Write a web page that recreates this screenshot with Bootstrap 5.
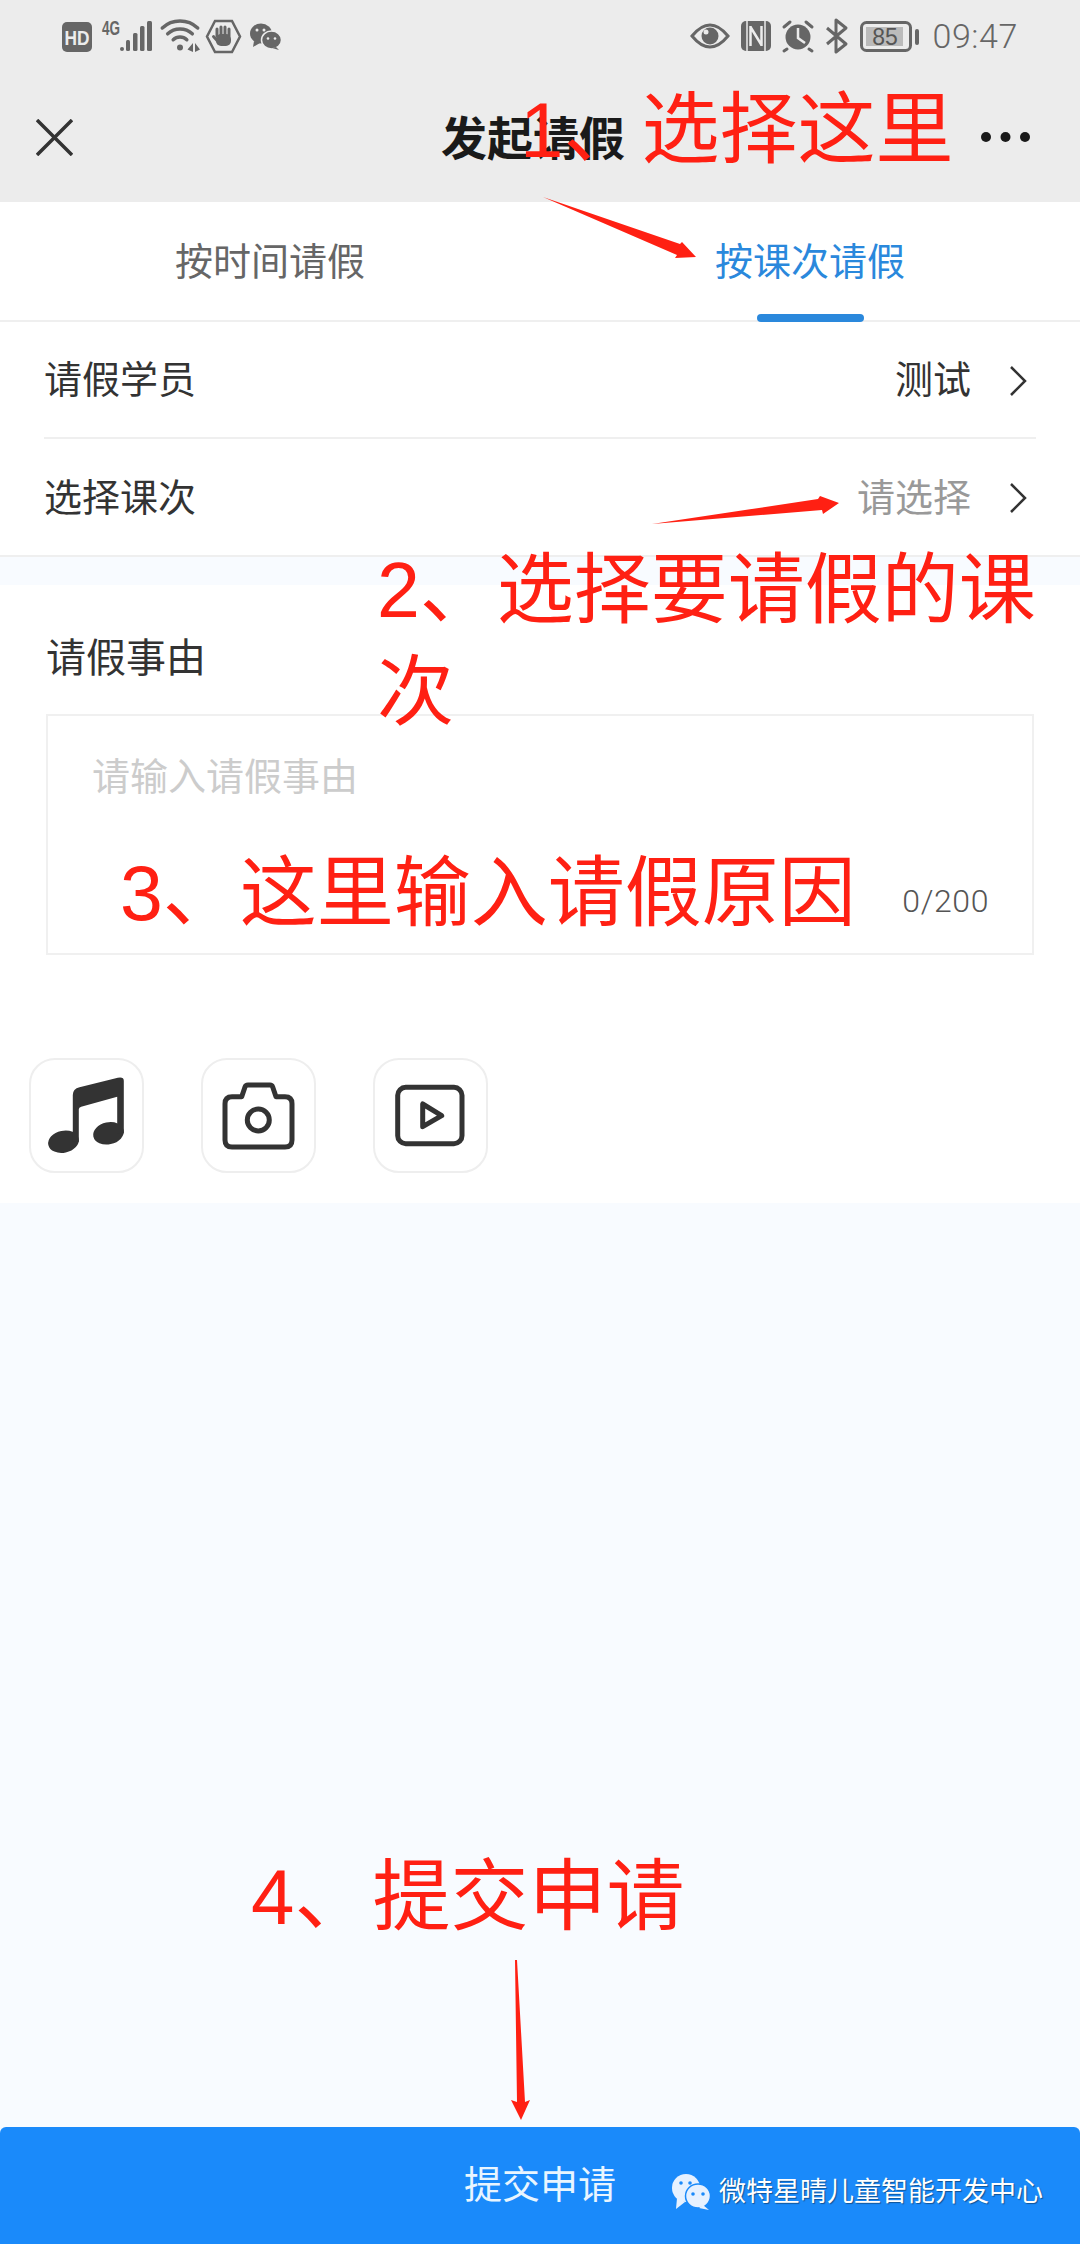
<!DOCTYPE html>
<html lang="zh-CN">
<head>
    <meta charset="UTF-8">
    <meta name="viewport" content="width=device-width, initial-scale=1.0">
    <title>发起请假</title>
    <link href="https://cdn.jsdelivr.net/npm/bootstrap@5.3.0/dist/css/bootstrap.min.css" rel="stylesheet">
    <style>
        body { font-family: "Liberation Sans", "Noto Sans CJK SC", sans-serif; background: #f8fbff; color: #333; }
        .leave-page { width: 1080px; height: 2244px; position: relative; overflow: hidden; }
        .top-area { background: #ececec; height: 202px; }
        .status-row { height: 72px; padding: 0 62px; }
        .clock { font-family: Roboto, sans-serif; font-weight: 300; font-size: 34px; color: #666; margin-left: 9px; line-height: 1; letter-spacing: .6px; }
        .title-row { display: grid; grid-template-columns: 1fr auto 1fr; height: 130px; padding: 0 50px 0 36px; align-items: center; }
        .page-title { font-size: 46px; font-weight: 700; color: #1a1a1a; line-height: 1; margin: 0; position: relative; top: 2px; }
        .tab-row { height: 120px; background: #fff; border-bottom: 2px solid #efefef; }
        .tab-item { width: 540px; font-size: 38px; color: #666; height: 118px; line-height: 120px; text-align: center; position: relative; }
        .tab-active { color: #2a88dc; }
        .tab-active::after { content: ""; position: absolute; left: 217px; bottom: -2px; width: 107px; height: 8px; border-radius: 4px; background: #2a88dc; }
        .form-rows { background: #fff; padding: 0 44px; border-bottom: 2px solid #efefef; border-radius: 0; }
        .form-rows .list-group-item { height: 117px; padding: 2px 9px 0 0; font-size: 38px; color: #333; background: transparent; border-color: #efefef; border-width: 0 0 2px; }
        .form-rows .list-group-item:last-child { border-bottom: 0; height: 116px; }
        .row-value { gap: 38px; }
        .row-muted { color: #999; }
        .reason-box { background: #fff; margin-top: 28px; height: 618px; padding: 45px 46px 0 46px; }
        .reason-label { font-size: 40px; line-height: 56px; color: #333; margin-bottom: 28px; }
        .reason-wrap { position: relative; }
        .reason-input { display: block; width: 100%; height: 241px; padding: 36px 44px; font-size: 38px; line-height: 50px; border: 2px solid #f0f0f0; border-radius: 0; resize: none; box-shadow: none; }
        .reason-input::placeholder { color: #ccc; opacity: 1; }
        .reason-count { position: absolute; right: 45px; bottom: 35px; font-family: Roboto, sans-serif; font-weight: 300; font-size: 32px; line-height: 38px; color: #555; letter-spacing: .6px; }
        .media-row { margin: 103px 0 0 -17px; gap: 57px; }
        .media-btn { width: 115px; height: 115px; border: 2px solid #eeeeee; border-radius: 26px; background: #fff; padding: 0; }
        .media-btn svg { display: block; width: 111px; height: 111px; }
        .submit-bar { position: absolute; left: 0; right: 0; bottom: 0; height: 117px; background: #1a8afa; color: #e8f5ff; font-size: 38px; border: 0; border-radius: 6px 6px 0 0; padding: 0; }
        .submit-bar:hover { background: #1a8afa; color: #e8f5ff; }
        .mark-layer { position: absolute; left: 0; top: 0; pointer-events: none; }
        .note-text { position: absolute; color: #ff2013; font-size: 78px; line-height: 102px; white-space: nowrap; }
        .note-one { left: 520px; top: 79px; }
        .note-two { left: 377px; top: 539px; width: 670px; white-space: normal; font-size: 77px; }
        .note-three { left: 120px; top: 842px; font-size: 77px; }
        .note-four { left: 251px; top: 1846px; }
        .water-mark { position: absolute; left: 671px; top: 2172px; gap: 8px; font-size: 27px; line-height: 40px; color: #fff; text-shadow: 1px 1px 1px rgba(0,0,0,.4); white-space: nowrap; }
    </style>
</head>
<body>
    <div class="leave-page d-flex flex-column">
        <div class="top-area">
            <div class="status-row d-flex justify-content-between align-items-center">
                <svg width="220" height="40" viewBox="62 16 220 40" fill="#666">
                    <!-- HD -->
                    <rect x="62" y="22" width="30" height="30" rx="5"/>
                    <text x="64.5" y="44.5" font-family="Liberation Sans" font-weight="700" font-size="21" fill="#ececec" textLength="25" lengthAdjust="spacingAndGlyphs">HD</text>
                    <!-- 4G + signal -->
                    <text x="102" y="35" font-family="Liberation Sans" font-weight="700" font-size="20" textLength="18" lengthAdjust="spacingAndGlyphs">4G</text>
                    <rect x="120" y="47" width="4" height="4" rx="2"/>
                    <rect x="126" y="40" width="4" height="11" rx="1.5"/>
                    <rect x="133" y="33" width="4.5" height="18" rx="1.5"/>
                    <rect x="140" y="26" width="4.5" height="25" rx="1.5"/>
                    <rect x="147" y="21" width="5" height="30" rx="1.5"/>
                    <!-- wifi -->
                    <g fill="none" stroke="#666" stroke-width="3.5" stroke-linecap="round">
                        <path d="M162.3 28A26 26 0 0 1 197.7 28"/>
                        <path d="M167.7 33.8A18 18 0 0 1 192.3 33.8"/>
                        <path d="M173.2 39.7A10 10 0 0 1 186.8 39.7"/>
                    </g>
                    <circle cx="180" cy="47.5" r="3"/>
                    <path d="M193 43V52L187.5 49.5ZM195 43V52L200 49.5Z"/>
                    <!-- hand -->
                    <path d="M207 36.5L215 21H232L240 36.5L232 52H215Z" fill="none" stroke="#666" stroke-width="2.5"/>
                    <path d="M217 36V29M221 35V27M225 35V27M229 36V29" stroke="#666" stroke-width="3" stroke-linecap="round"/>
                    <path d="M213.5 36.5L217.5 41" stroke="#666" stroke-width="3" stroke-linecap="round"/>
                    <rect x="216" y="34" width="15" height="12" rx="5"/>
                    <!-- wechat -->
                    <ellipse cx="261" cy="33.5" rx="11" ry="10"/>
                    <path d="M254 41L253 47L260 43Z"/>
                    <circle cx="257" cy="30" r="1.5" fill="#ececec"/>
                    <circle cx="264" cy="30" r="1.5" fill="#ececec"/>
                    <ellipse cx="271.5" cy="40" rx="10" ry="9" stroke="#ececec" stroke-width="1.5"/>
                    <path d="M276 47L279 50L272 48Z"/>
                    <circle cx="268" cy="38.5" r="1.3" fill="#ececec"/>
                    <circle cx="275" cy="38.5" r="1.3" fill="#ececec"/>
                </svg>
                <div class="d-flex align-items-center">
                    <svg width="235" height="40" viewBox="690 16 235 40" fill="#666">
                        <!-- eye -->
                        <path d="M694 36Q712 14 730 36Q712 58 694 36Z" fill="none" stroke="#666" stroke-width="3"/>
                        <circle cx="712" cy="36" r="8.5"/>
                        <circle cx="708" cy="32" r="2.5" fill="#ececec"/>
                        <!-- nfc -->
                        <rect x="743" y="21" width="30" height="30" rx="5"/>
                        <path d="M749 21V51M767 21V51" stroke="#ececec" stroke-width="1.5"/>
                        <path d="M752.5 26V46M763.5 26V46M752.5 27L763.5 45" fill="none" stroke="#ececec" stroke-width="2.5"/>
                        <!-- alarm -->
                        <circle cx="800" cy="37" r="12.5"/>
                        <path d="M800 28V38L807 43" fill="none" stroke="#ececec" stroke-width="2.5"/>
                        <path d="M786 27L792 22M814 27L808 22M789 49L786 51M811 49L814 51" fill="none" stroke="#666" stroke-width="3" stroke-linecap="round"/>
                        <!-- bluetooth -->
                        <path d="M829 28L848 44L838 52V20L848 28L829 44" fill="none" stroke="#666" stroke-width="3" stroke-linejoin="round"/>
                        <!-- battery -->
                        <rect x="863.5" y="22.5" width="49" height="28" rx="5" fill="none" stroke="#666" stroke-width="3"/>
                        <rect x="868" y="27" width="37" height="19" fill="#bbb"/>
                        <text x="887" y="45" text-anchor="middle" font-family="Liberation Sans" font-size="23" fill="#555">85</text>
                        <rect x="917" y="29" width="4" height="16" rx="2"/>
                    </svg>
                    <span class="clock">09:47</span>
                </div>
            </div>
            <div class="title-row">
                <div>
                    <svg width="37" height="37" viewBox="0 0 37 37" class="d-block"><path d="M1 1L36 36M36 1L1 36" fill="none" stroke="#333" stroke-width="3.5"/></svg>
                </div>
                <h1 class="page-title">发起请假</h1>
                <div class="d-flex justify-content-end">
                    <svg width="49" height="10" viewBox="0 0 49 10" class="d-block" fill="#1a1a1a"><circle cx="5" cy="5" r="5"/><circle cx="24.5" cy="5" r="5"/><circle cx="44" cy="5" r="5"/></svg>
                </div>
            </div>
        </div>

        <div class="tab-row d-flex">
            <div class="tab-item">按时间请假</div>
            <div class="tab-item tab-active">按课次请假</div>
        </div>

        <div class="list-group list-group-flush form-rows">
            <div class="list-group-item d-flex justify-content-between align-items-center">
                <span>请假学员</span>
                <span class="d-flex align-items-center row-value">测试
                    <svg width="18" height="32" viewBox="0 0 18 32"><path d="M2 2L16 16L2 30" fill="none" stroke="#333" stroke-width="2.5"/></svg>
                </span>
            </div>
            <div class="list-group-item d-flex justify-content-between align-items-center">
                <span>选择课次</span>
                <span class="d-flex align-items-center row-value"><span class="row-muted">请选择</span>
                    <svg width="18" height="32" viewBox="0 0 18 32"><path d="M2 2L16 16L2 30" fill="none" stroke="#333" stroke-width="2.5"/></svg>
                </span>
            </div>
        </div>

        <div class="reason-box">
            <div class="reason-label">请假事由</div>
            <div class="reason-wrap">
                <textarea class="form-control reason-input" placeholder="请输入请假事由"></textarea>
                <span class="reason-count">0/200</span>
            </div>
            <div class="d-flex media-row">
                <button type="button" class="btn media-btn">
                    <svg viewBox="2 2 111 111" fill="#333">
                        <ellipse cx="34.5" cy="83.7" rx="15.5" ry="11" transform="rotate(-12 34.5 83.7)"/>
                        <ellipse cx="79.5" cy="75.3" rx="15.5" ry="11" transform="rotate(-12 79.5 75.3)"/>
                        <path d="M43.8 83.7V37Q43.8 31 50.5 29.3L88.8 19.7Q94.8 18.5 94.8 22.7V75.3H88.2V38.7L52.2 48.7Q49.8 49.5 49.8 51.3V83.7Z"/>
                    </svg>
                </button>
                <button type="button" class="btn media-btn">
                    <svg viewBox="2 2 111 111" fill="none" stroke="#333" stroke-width="5" stroke-linejoin="round">
                        <path d="M31 38.7H40.7L44 29Q44.7 27 47 27H69Q71 27 71.7 29L75 38.7H84Q91 38.7 91 45.7V82Q91 89 84 89H31Q24 89 24 82V45.7Q24 38.7 31 38.7Z"/>
                        <circle cx="57.3" cy="62" r="11"/>
                    </svg>
                </button>
                <button type="button" class="btn media-btn">
                    <svg viewBox="2 2 111 111" fill="none" stroke="#333" stroke-width="5" stroke-linejoin="round">
                        <rect x="24.7" y="29.3" width="64.3" height="56.4" rx="8"/>
                        <path d="M49.7 46V68.7L68.7 57.7Z"/>
                    </svg>
                </button>
            </div>
        </div>

        <button type="button" class="btn submit-bar">提交申请</button>

        <!-- red marks put on top of the screenshot -->
        <svg class="mark-layer" width="1080" height="2244" viewBox="0 0 1080 2244" fill="#ff2013">
            <polygon points="543,197 680,244 682,242 696,257 675,258 677,255"/>
            <polygon points="652,524 818,499 820,496 839,503 823,514 822,510"/>
            <polygon points="515,1960 517,1960 525,2102 530,2100 521,2120 511,2100 517,2102"/>
        </svg>
        <div class="note-text note-one">1、选择这里</div>
        <div class="note-text note-two">2、选择要请假的课次</div>
        <div class="note-text note-three">3、这里输入请假原因</div>
        <div class="note-text note-four">4、提交申请</div>

        <div class="water-mark d-flex align-items-center">
            <svg width="40" height="38" viewBox="0 0 40 38" fill="#e6f1ff">
                <ellipse cx="15" cy="15" rx="14" ry="14"/>
                <path d="M6 25L5 36L14 29Z"/>
                <ellipse cx="27" cy="23" rx="12.5" ry="12" stroke="#1a8afa" stroke-width="1.5"/>
                <path d="M32 32L38 37L28 35Z"/>
                <circle cx="10" cy="10" r="1.8" fill="#1a8afa"/>
                <circle cx="19" cy="10" r="1.8" fill="#1a8afa"/>
                <circle cx="22" cy="21" r="1.8" fill="#1a8afa"/>
                <circle cx="32" cy="21" r="1.8" fill="#1a8afa"/>
            </svg>
            <span>微特星晴儿童智能开发中心</span>
        </div>
    </div>

    <script src="https://cdn.jsdelivr.net/npm/bootstrap@5.3.0/dist/js/bootstrap.bundle.min.js"></script>
</body>
</html>
